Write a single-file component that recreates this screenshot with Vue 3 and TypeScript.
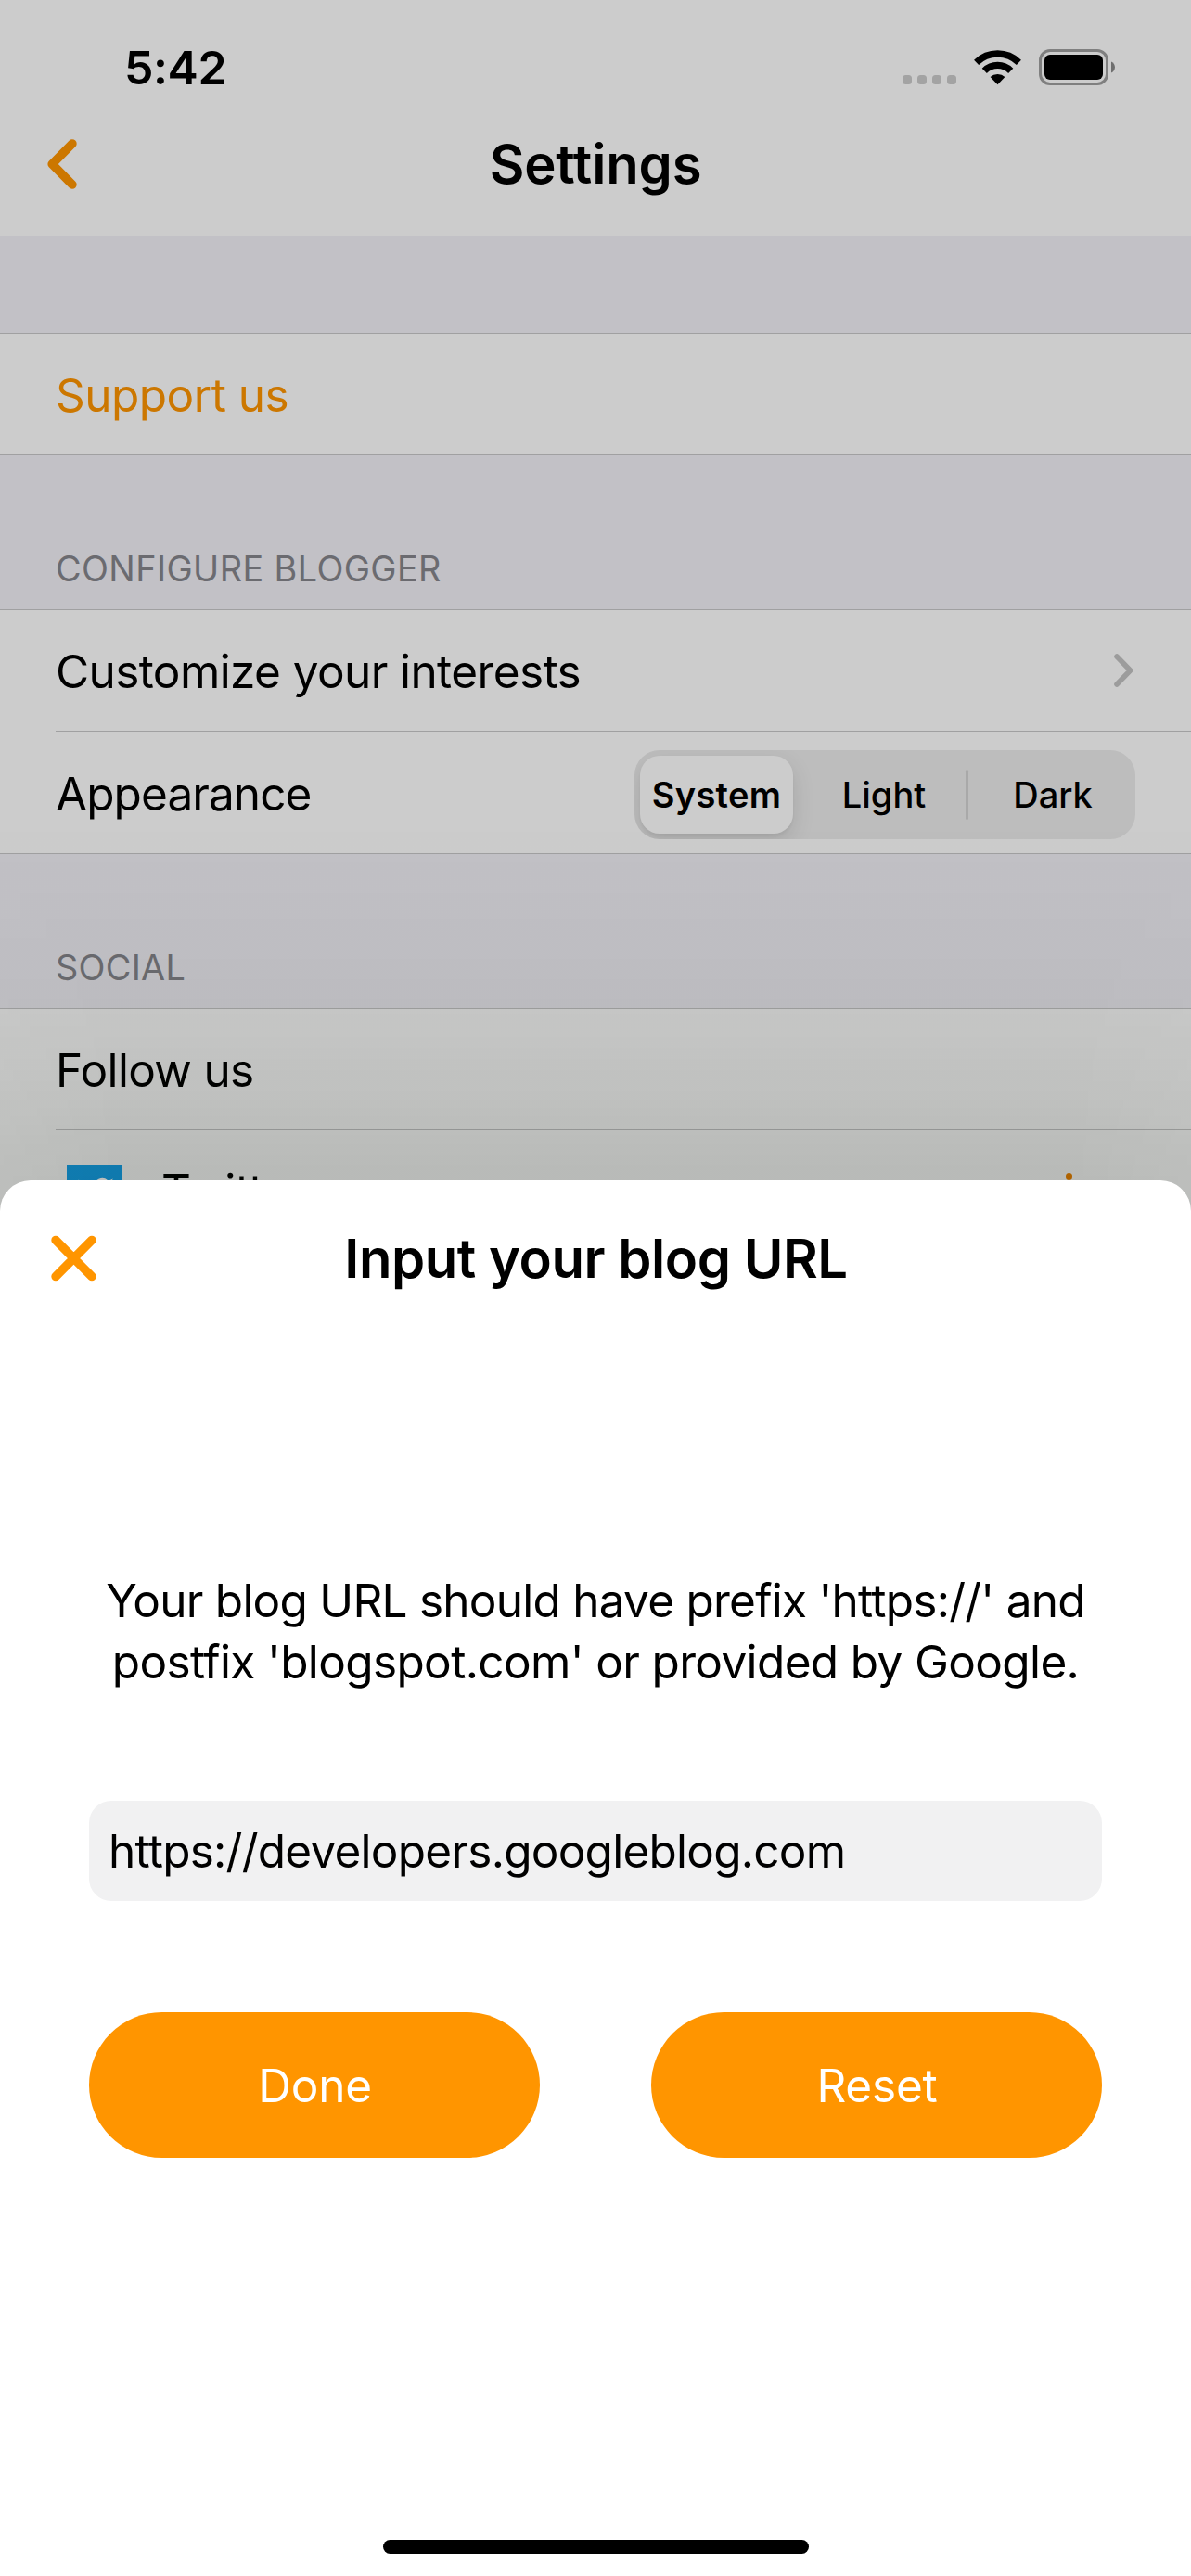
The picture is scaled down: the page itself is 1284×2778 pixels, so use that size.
<script setup lang="ts">
import { ref } from 'vue'

const appearances = ['System', 'Light', 'Dark'] as const
type Appearance = (typeof appearances)[number]

const appearance = ref<Appearance>('System')
const blogUrl = ref<string>('https://developers.googleblog.com')
</script>

<template>
  <div class="screen">
    <header class="top">
      <div class="status">
        <span class="time">5:42</span>
        <div class="indicators">
          <div class="signal"><i v-for="n in 4" :key="n"></i></div>
          <svg class="wifi" width="51" height="38" viewBox="0 0 51 38" fill="none" stroke="#000" stroke-width="7.3">
            <path d="M2.6 13.3A32.8 32.8 0 0 1 48.4 13.3" />
            <path d="M11.3 22.3A20.2 20.2 0 0 1 39.7 22.3" />
            <path d="M25.5 37.2L17.6 29A11.6 11.6 0 0 1 33.4 29Z" fill="#000" stroke="none" />
          </svg>
          <svg width="83" height="39" viewBox="0 0 83 39">
            <rect x="1.5" y="1.5" width="72" height="36" rx="10.5" fill="none" stroke="#7f7f7f" stroke-width="3" />
            <rect x="6" y="6" width="63" height="27" rx="6" />
            <path d="M78 13.5C83.3 15.5 83.3 23.5 78 25.5Z" fill="#6e6e6e" />
          </svg>
        </div>
      </div>
      <div class="nav">
        <svg class="back" width="32" height="54" viewBox="0 0 32 54" fill="none" stroke="#cc7700" stroke-width="9.6" stroke-linecap="round" stroke-linejoin="round">
          <path d="M26.9 5L5.2 27L26.9 49" />
        </svg>
        <h1>Settings</h1>
      </div>
    </header>

    <section class="group first">
      <div class="row"><span class="link">Support us</span></div>
    </section>

    <h2 class="label">CONFIGURE BLOGGER</h2>
    <section class="group">
      <div class="row divided">
        <span class="customize">Customize your interests</span>
        <svg class="chevron" width="21" height="36" viewBox="0 0 21 36" fill="none" stroke="#9c9c9c" stroke-width="5.6" stroke-linecap="round" stroke-linejoin="round">
          <path d="M3 3L17.6 18L3 33" />
        </svg>
      </div>
      <div class="row tall">
        <span class="appearance">Appearance</span>
        <div class="segments">
          <button
            v-for="option in appearances"
            :key="option"
            class="segment"
            :class="{ active: option === appearance }"
            @click="appearance = option"
          >{{ option }}</button>
        </div>
      </div>
    </section>

    <h2 class="label social">SOCIAL</h2>
    <section class="group">
      <div class="row divided"><span class="follow">Follow us</span></div>
      <div class="row account">
        <span class="bird">
          <svg width="41" height="41" viewBox="0 0 24 24" fill="#d0d0d0">
            <path d="M23.95 4.57a10 10 0 0 1-2.82.77 4.96 4.96 0 0 0 2.16-2.72c-.95.55-2 .95-3.13 1.18a4.92 4.92 0 0 0-8.38 4.48C7.69 8.1 4.07 6.13 1.64 3.16a4.82 4.82 0 0 0-.67 2.48c0 1.71.87 3.21 2.19 4.1a4.9 4.9 0 0 1-2.23-.62v.06a4.92 4.92 0 0 0 3.95 4.83 5 5 0 0 1-2.21.08 4.94 4.94 0 0 0 4.6 3.42A9.87 9.87 0 0 1 0 19.54a13.99 13.99 0 0 0 7.55 2.21c9.05 0 14-7.5 14-13.98 0-.21 0-.42-.02-.63a9.94 9.94 0 0 0 2.42-2.57z" />
          </svg>
        </span>
        <span>Twitter</span>
        <i class="marker"></i>
      </div>
    </section>

    <div class="shade"></div>
    <div class="sheet">
      <div class="sheet-head">
        <svg class="close" width="50" height="50" viewBox="0 0 50 50" fill="none" stroke="#ff9500" stroke-width="9.4" stroke-linecap="round">
          <path d="M5 5.4L44 44.6M44 5.4L5 44.6" />
        </svg>
        <h1 class="sheet-title">Input your blog URL</h1>
      </div>
      <p class="hint">
        <span class="hint-a">Your blog URL should have prefix 'https://' and</span>
        <span class="hint-b">postfix 'blogspot.com' or provided by Google.</span>
      </p>
      <input v-model="blogUrl" class="url" type="text" spellcheck="false" />
      <div class="actions">
        <button class="pill">Done</button>
        <button class="pill">Reset</button>
      </div>
      <div class="home"></div>
    </div>
  </div>
</template>

<style>
body {
  margin: 0;
}
</style>

<style scoped>
.screen {
  position: relative;
  width: 1284px;
  height: 2778px;
  overflow: hidden;
  background: #c2c1c6;
  color: #000;
  font-family: Inter, "Liberation Sans", sans-serif;
  font-size: 49.5px;
  line-height: 60px;
}
h1,
h2,
p {
  margin: 0;
}
button,
input {
  border: 0;
  margin: 0;
  padding: 0;
  outline: 0;
  background: none;
  color: inherit;
  font: inherit;
}
.top {
  height: 254px;
  background: #ccc;
}
.status {
  display: flex;
  justify-content: space-between;
  align-items: center;
  box-sizing: border-box;
  height: 132px;
  padding: 13px 81px 0 134px;
}
.time {
  font-size: 50px;
  font-weight: 600;
  letter-spacing: -0.4px;
}
.indicators {
  display: flex;
  align-items: center;
}
.signal {
  display: flex;
  gap: 6px;
  margin: 26px 19px 0 0;
}
.signal i {
  width: 10px;
  height: 10px;
  border-radius: 3.5px;
  background: #a3a3a3;
}
.wifi {
  margin-right: 19px;
}
.nav {
  display: grid;
  grid-template-columns: 100px 1fr 100px;
  align-items: center;
  height: 90px;
}
.back {
  margin-left: 51px;
}
h1 {
  font-size: 58px;
  font-weight: 600;
  text-align: center;
  letter-spacing: -0.16px;
}
.group {
  border-top: 1px solid #a0a0a1;
  border-bottom: 1px solid #a0a0a1;
  background: #ccc;
}
.first {
  margin-top: 105px;
}
.row {
  display: flex;
  align-items: center;
  justify-content: space-between;
  height: 130px;
  padding: 0 60px;
}
.divided {
  position: relative;
}
.divided::after {
  content: "";
  position: absolute;
  left: 60px;
  right: 0;
  bottom: -1px;
  height: 1px;
  background: #a0a0a1;
}
.tall {
  box-sizing: border-box;
  height: 132px;
  padding-top: 5px;
}
.link {
  padding-top: 2px;
  color: #cc7700;
  letter-spacing: -0.51px;
}
.customize {
  padding-top: 1px;
  letter-spacing: -0.6px;
}
.appearance {
  padding-bottom: 2px;
  letter-spacing: -0.93px;
}
.follow {
  padding-top: 1px;
  letter-spacing: -0.68px;
}
.chevron {
  margin-right: 2px;
}
.label {
  height: 48px;
  padding: 98px 60px 20px;
  color: #6b6b70;
  font-size: 37.8px;
  font-weight: 400;
  line-height: 48px;
  letter-spacing: 0.41px;
}
.social {
  letter-spacing: 0.3px;
}
.segments {
  display: flex;
  width: 540px;
  height: 96px;
  border-radius: 27px;
  overflow: hidden;
  background: #bdbdbd;
}
.segment {
  position: relative;
  flex: 1;
  font-size: 38px;
  font-weight: 500;
}
.segment:nth-child(2) {
  padding-right: 3px;
}
.segment:last-child {
  padding-left: 1px;
}
.segment.active {
  flex: none;
  width: 165px;
  margin: 6px 9px 6px 6px;
  border-radius: 21px;
  background: #ccc;
  box-shadow: 0 9px 24px rgba(0, 0, 0, 0.12), 0 3px 3px rgba(0, 0, 0, 0.04);
  font-weight: 600;
  letter-spacing: 0.31px;
}
.segment:last-child::before {
  content: "";
  position: absolute;
  left: -4px;
  top: 21px;
  width: 3px;
  height: 54px;
  border-radius: 2px;
  background: #a9a9a9;
}
.account {
  justify-content: flex-start;
  height: 132px;
  padding: 0 60px 0 72px;
  letter-spacing: -0.5px;
}
.bird {
  box-sizing: border-box;
  width: 60px;
  height: 60px;
  padding: 10px 0 0 10px;
  margin: 4px 42px 0 0;
  background: #1184c0;
  line-height: 0;
}
.marker {
  width: 7px;
  height: 7px;
  margin: -32px 68px 0 auto;
  border-radius: 50%;
  background: #c06a00;
}
/* soft shadow cast upwards by the sheet */
.shade {
  position: absolute;
  left: 0;
  right: 0;
  top: 880px;
  height: 430px;
  background: linear-gradient(
    rgba(5, 25, 0, 0) 0,
    rgba(5, 25, 0, 0.012) 100px,
    rgba(5, 25, 0, 0.032) 208px,
    rgba(5, 25, 0, 0.058) 292px,
    rgba(5, 25, 0, 0.078) 338px,
    rgba(5, 25, 0, 0.098) 393px,
    rgba(5, 25, 0, 0.1) 430px
  );
  -webkit-mask-image: linear-gradient(90deg, rgba(0, 0, 0, 0.8), #000 130px, #000 1154px, rgba(0, 0, 0, 0.8));
  mask-image: linear-gradient(90deg, rgba(0, 0, 0, 0.8), #000 130px, #000 1154px, rgba(0, 0, 0, 0.8));
}
.sheet {
  position: absolute;
  left: 0;
  right: 0;
  top: 1273px;
  bottom: 0;
  border-radius: 33px 33px 0 0;
  background: #fff;
}
.sheet-head {
  display: grid;
  grid-template-columns: 105px 1fr 105px;
  align-items: center;
  height: 168px;
}
.close {
  margin-left: 55px;
}
.sheet-title {
  padding-left: 1px;
  letter-spacing: -0.44px;
}
.hint {
  display: flex;
  flex-direction: column;
  margin-top: 252px;
  line-height: 66px;
  text-align: center;
}
.hint-a {
  letter-spacing: -0.75px;
}
.hint-b {
  letter-spacing: -0.64px;
}
.url {
  display: block;
  box-sizing: border-box;
  width: 1092px;
  height: 108px;
  margin: 117px 96px 0;
  padding: 0 21px;
  border-radius: 24px;
  background: #f1f1f2;
  letter-spacing: -0.76px;
}
.actions {
  display: flex;
  gap: 120px;
  margin: 120px 96px 0;
}
.pill {
  flex: 1;
  height: 157px;
  padding-left: 1px;
  border-radius: 79px;
  background: #ff9500;
  color: #fff;
  letter-spacing: -0.2px;
}
.home {
  width: 459px;
  height: 15px;
  margin: 412px auto 0;
  border-radius: 8px;
  background: #000;
}
</style>
